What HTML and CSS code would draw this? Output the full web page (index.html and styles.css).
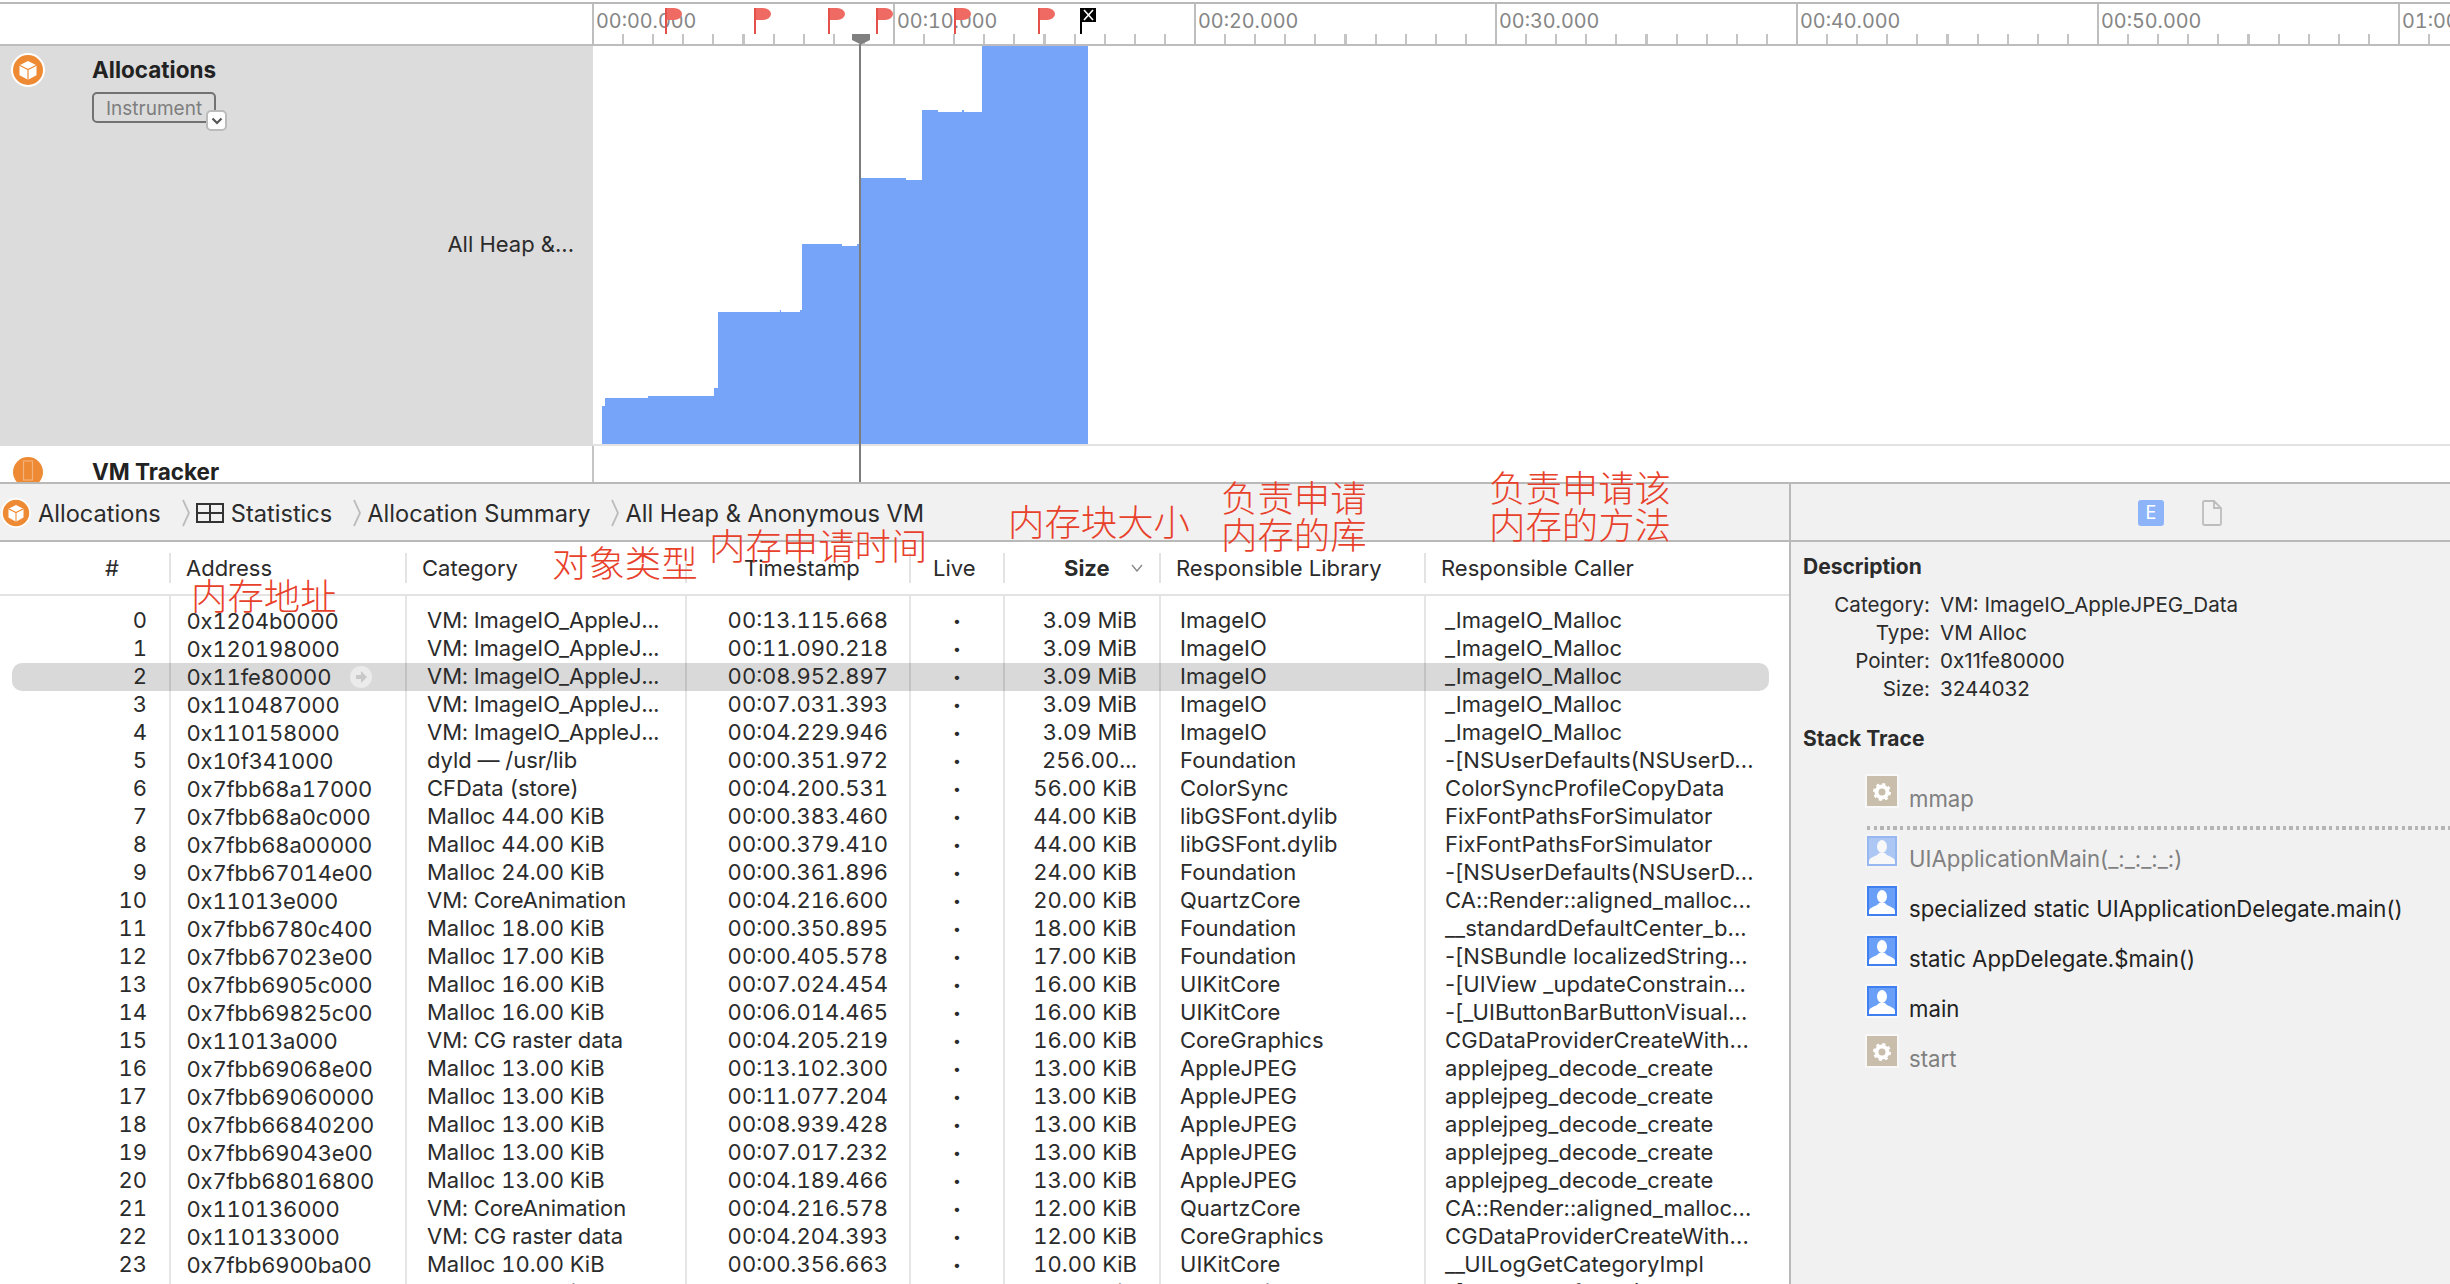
FILE: index.html
```html
<!DOCTYPE html>
<html lang="en">
<head>
<meta charset="utf-8">
<title>Instruments Allocations</title>
<link rel="stylesheet" href="styles.css">
</head>
<body>
<svg class="sprites" width="0" height="0" aria-hidden="true">
  <symbol id="cube" viewBox="0 0 34 34">
    <circle cx="17" cy="17" r="17" fill="#fff"/>
    <circle cx="17" cy="17" r="15" fill="#ee8a33"/>
    <path d="M17 8l8.5 4.2v10L17 26.8l-8.5-4.6v-10z" fill="#fff"/>
    <path d="M8.5 12.2l8.500 4.300 8.500-4.300M17 16.500v10.300" fill="none" stroke="#ee8a33" stroke-width="1.200"/>
  </symbol>
  <symbol id="person" viewBox="0 0 30 30">
    <rect width="30" height="30" fill="#3f7ff0"/>
    <rect x="2" y="2" width="26" height="26" fill="#6a9ff7"/>
    <ellipse cx="15" cy="10.500" rx="5" ry="6.500" fill="#fff"/>
    <path d="M2 28v-3c0-4 8-4.500 10-8h6c2 3.500 10 4 10 8v3z" fill="#fff"/>
  </symbol>
  <symbol id="gear" viewBox="0 0 30 30">
    <rect width="30" height="30" fill="#c9bdab"/>
    <circle cx="15" cy="16" r="5.500" fill="none" stroke="#fff" stroke-width="4"/>
    <circle cx="15" cy="16" r="8" fill="none" stroke="#fff" stroke-width="2" stroke-dasharray="3.200 3.080"/>
  </symbol>
</svg>

<header class="ruler">
  <div class="ruler-left"></div>
  <div class="ruler-scale">
    <div class="seg"><span>00:00.000</span></div>
    <div class="seg"><span>00:10.000</span></div>
    <div class="seg"><span>00:20.000</span></div>
    <div class="seg"><span>00:30.000</span></div>
    <div class="seg"><span>00:40.000</span></div>
    <div class="seg"><span>00:50.000</span></div>
    <div class="seg"><span>01:00.000</span></div>
  </div>
  <svg class="flags" width="1100" height="46" viewBox="0 0 1100 46">
    <g fill="#ee6a62">
      <path d="M666 8h8a8 6 0 0 1 0 12h-8z"/>
      <path d="M755 8h8a8 6 0 0 1 0 12h-8z"/>
      <path d="M829 8h8a8 6 0 0 1 0 12h-8z"/>
      <path d="M877 8h8a8 6 0 0 1 0 12h-8z"/>
      <path d="M955 8h8a8 6 0 0 1 0 12h-8z"/>
      <path d="M1039 8h8a8 6 0 0 1 0 12h-8z"/>
    </g>
    <g stroke="#e4504a" stroke-width="2">
      <path d="M666 8v26M755 8v26M829 8v26M877 8v26M955 8v26M1039 8v26"/>
    </g>
    <path d="M1081 8v26" stroke="#000" stroke-width="2"/>
    <rect x="1081" y="8" width="15" height="14" fill="#000"/>
    <path d="M1084 10l9 10M1093 10l-9 10" stroke="#fff" stroke-width="1.600"/>
    <path d="M852 34h18v6l-9 4.500-9-4.500z" fill="#808080"/>
  </svg>
</header>

<section class="track track-main">
  <div class="track-left">
    <div class="track-head">
      <svg class="track-icon"><use href="#cube"/></svg>
      <div class="track-names">
        <div class="track-name">Allocations</div>
        <div class="track-btn">Instrument
          <span class="track-chev"><svg width="12" height="8" viewBox="0 0 12 8"><path d="M1.500 1.500L6 6l4.500-4.500" fill="none" stroke="#555" stroke-width="2.200"/></svg></span>
        </div>
      </div>
    </div>
    <div class="track-sub">All Heap &amp;...</div>
  </div>
  <div class="track-right">
    <svg class="chart" width="1857" height="398" viewBox="593 46 1857 398">
      <path fill="#75a4f8" d="M602 444V406H605V398H648V396H714V388H718V312H780V310H781V312H800V310H802V244H842V246H857V244H860V178H906V180H922V110H938V112H962V110H964V112H982V46H1088V444Z"/>
    </svg>
  </div>
</section>
<section class="track track-vm">
  <div class="vm-left">
    <svg class="vm-icon" width="30" height="36" viewBox="0 0 30 36">
      <circle cx="15" cy="15" r="15" fill="#ee8a33" transform="translate(0 11)"/>
      <rect x="10.500" y="15" width="9" height="19" fill="none" stroke="#f3b27a" stroke-width="1.200"/>
    </svg>
    <div class="track-name">VM Tracker</div>
  </div>
  <div class="vm-right"></div>
</section>
<div class="playhead"></div>

<main class="main">
  <div class="left">
    <nav class="crumbs">
      <svg class="crumb-icon"><use href="#cube"/></svg>
      <span class="crumb c1">Allocations</span>
      <svg class="sep" width="8" height="28" viewBox="0 0 8 28"><path d="M1 1l6 13-6 13" fill="none" stroke="#bcbcbc" stroke-width="1.800"/></svg>
      <svg class="grid-icon" width="28" height="20" viewBox="0 0 28 20"><path d="M1 1h26v18H1zM1 10h26M14 1v18" fill="none" stroke="#333" stroke-width="2"/></svg>
      <span class="crumb c2">Statistics</span>
      <svg class="sep" width="8" height="28" viewBox="0 0 8 28"><path d="M1 1l6 13-6 13" fill="none" stroke="#bcbcbc" stroke-width="1.800"/></svg>
      <span class="crumb c3">Allocation Summary</span>
      <svg class="sep" width="8" height="28" viewBox="0 0 8 28"><path d="M1 1l6 13-6 13" fill="none" stroke="#bcbcbc" stroke-width="1.800"/></svg>
      <span class="crumb c4">All Heap &amp; Anonymous VM</span>
    </nav>
    <div class="thead">
      <span class="h-num">#</span>
      <span>Address</span>
      <span>Category</span>
      <span class="h-time">Timestamp</span>
      <span>Live</span>
      <span class="h-size"><b>Size</b><svg width="12" height="8" viewBox="0 0 12 8"><path d="M1 1l5 6 5-6" fill="none" stroke="#888" stroke-width="1.400"/></svg></span>
      <span>Responsible Library</span>
      <span>Responsible Caller</span>
    </div>
    <div class="tbody">
      <div class="row spacer"><span></span><span></span><span></span><span></span><span></span><span></span><span></span><span></span></div>
      <div class="row"><span>0</span><span>0x1204b0000</span><span>VM: ImageIO_AppleJ...</span><span>00:13.115.668</span><span>•</span><span>3.09 MiB</span><span>ImageIO</span><span>_ImageIO_Malloc</span></div>
      <div class="row"><span>1</span><span>0x120198000</span><span>VM: ImageIO_AppleJ...</span><span>00:11.090.218</span><span>•</span><span>3.09 MiB</span><span>ImageIO</span><span>_ImageIO_Malloc</span></div>
      <div class="row sel"><span>2</span><span>0x11fe80000<svg class="go" width="22" height="22" viewBox="0 0 22 22"><circle cx="11" cy="11" r="11" fill="#ebebeb"/><path d="M6 9h5V5l6 6-6 6v-4H6z" fill="#c8c8c8"/></svg></span><span>VM: ImageIO_AppleJ...</span><span>00:08.952.897</span><span>•</span><span>3.09 MiB</span><span>ImageIO</span><span>_ImageIO_Malloc</span></div>
      <div class="row"><span>3</span><span>0x110487000</span><span>VM: ImageIO_AppleJ...</span><span>00:07.031.393</span><span>•</span><span>3.09 MiB</span><span>ImageIO</span><span>_ImageIO_Malloc</span></div>
      <div class="row"><span>4</span><span>0x110158000</span><span>VM: ImageIO_AppleJ...</span><span>00:04.229.946</span><span>•</span><span>3.09 MiB</span><span>ImageIO</span><span>_ImageIO_Malloc</span></div>
      <div class="row"><span>5</span><span>0x10f341000</span><span>dyld — /usr/lib</span><span>00:00.351.972</span><span>•</span><span>256.00...</span><span>Foundation</span><span>-[NSUserDefaults(NSUserD...</span></div>
      <div class="row"><span>6</span><span>0x7fbb68a17000</span><span>CFData (store)</span><span>00:04.200.531</span><span>•</span><span>56.00 KiB</span><span>ColorSync</span><span>ColorSyncProfileCopyData</span></div>
      <div class="row"><span>7</span><span>0x7fbb68a0c000</span><span>Malloc 44.00 KiB</span><span>00:00.383.460</span><span>•</span><span>44.00 KiB</span><span>libGSFont.dylib</span><span>FixFontPathsForSimulator</span></div>
      <div class="row"><span>8</span><span>0x7fbb68a00000</span><span>Malloc 44.00 KiB</span><span>00:00.379.410</span><span>•</span><span>44.00 KiB</span><span>libGSFont.dylib</span><span>FixFontPathsForSimulator</span></div>
      <div class="row"><span>9</span><span>0x7fbb67014e00</span><span>Malloc 24.00 KiB</span><span>00:00.361.896</span><span>•</span><span>24.00 KiB</span><span>Foundation</span><span>-[NSUserDefaults(NSUserD...</span></div>
      <div class="row"><span>10</span><span>0x11013e000</span><span>VM: CoreAnimation</span><span>00:04.216.600</span><span>•</span><span>20.00 KiB</span><span>QuartzCore</span><span>CA::Render::aligned_malloc...</span></div>
      <div class="row"><span>11</span><span>0x7fbb6780c400</span><span>Malloc 18.00 KiB</span><span>00:00.350.895</span><span>•</span><span>18.00 KiB</span><span>Foundation</span><span>__standardDefaultCenter_b...</span></div>
      <div class="row"><span>12</span><span>0x7fbb67023e00</span><span>Malloc 17.00 KiB</span><span>00:00.405.578</span><span>•</span><span>17.00 KiB</span><span>Foundation</span><span>-[NSBundle localizedString...</span></div>
      <div class="row"><span>13</span><span>0x7fbb6905c000</span><span>Malloc 16.00 KiB</span><span>00:07.024.454</span><span>•</span><span>16.00 KiB</span><span>UIKitCore</span><span>-[UIView _updateConstrain...</span></div>
      <div class="row"><span>14</span><span>0x7fbb69825c00</span><span>Malloc 16.00 KiB</span><span>00:06.014.465</span><span>•</span><span>16.00 KiB</span><span>UIKitCore</span><span>-[_UIButtonBarButtonVisual...</span></div>
      <div class="row"><span>15</span><span>0x11013a000</span><span>VM: CG raster data</span><span>00:04.205.219</span><span>•</span><span>16.00 KiB</span><span>CoreGraphics</span><span>CGDataProviderCreateWith...</span></div>
      <div class="row"><span>16</span><span>0x7fbb69068e00</span><span>Malloc 13.00 KiB</span><span>00:13.102.300</span><span>•</span><span>13.00 KiB</span><span>AppleJPEG</span><span>applejpeg_decode_create</span></div>
      <div class="row"><span>17</span><span>0x7fbb69060000</span><span>Malloc 13.00 KiB</span><span>00:11.077.204</span><span>•</span><span>13.00 KiB</span><span>AppleJPEG</span><span>applejpeg_decode_create</span></div>
      <div class="row"><span>18</span><span>0x7fbb66840200</span><span>Malloc 13.00 KiB</span><span>00:08.939.428</span><span>•</span><span>13.00 KiB</span><span>AppleJPEG</span><span>applejpeg_decode_create</span></div>
      <div class="row"><span>19</span><span>0x7fbb69043e00</span><span>Malloc 13.00 KiB</span><span>00:07.017.232</span><span>•</span><span>13.00 KiB</span><span>AppleJPEG</span><span>applejpeg_decode_create</span></div>
      <div class="row"><span>20</span><span>0x7fbb68016800</span><span>Malloc 13.00 KiB</span><span>00:04.189.466</span><span>•</span><span>13.00 KiB</span><span>AppleJPEG</span><span>applejpeg_decode_create</span></div>
      <div class="row"><span>21</span><span>0x110136000</span><span>VM: CoreAnimation</span><span>00:04.216.578</span><span>•</span><span>12.00 KiB</span><span>QuartzCore</span><span>CA::Render::aligned_malloc...</span></div>
      <div class="row"><span>22</span><span>0x110133000</span><span>VM: CG raster data</span><span>00:04.204.393</span><span>•</span><span>12.00 KiB</span><span>CoreGraphics</span><span>CGDataProviderCreateWith...</span></div>
      <div class="row"><span>23</span><span>0x7fbb6900ba00</span><span>Malloc 10.00 KiB</span><span>00:00.356.663</span><span>•</span><span>10.00 KiB</span><span>UIKitCore</span><span>__UILogGetCategoryImpl</span></div>
      <div class="row"><span>24</span><span>0x7fbb68014000</span><span>Malloc 8.00 KiB</span><span>00:00.352.104</span><span>•</span><span>8.00 KiB</span><span>Foundation</span><span>-[NSUserDefaults(NSUserD...</span></div>
    </div>
  </div>
  <aside class="panel">
    <div class="panel-bar">
      <span class="ext-btn">E</span>
      <svg width="20" height="26" viewBox="0 0 20 26"><path d="M1 2.500A1.500 1.500 0 0 1 2.500 1H12l7 7v15.500a1.500 1.500 0 0 1-1.500 1.500h-15A1.500 1.500 0 0 1 1 23.500zM12 1v7h7" fill="none" stroke="#bdbdbd" stroke-width="1.800"/></svg>
    </div>
    <div class="panel-body">
      <h2 class="panel-h desc-h">Description</h2>
      <dl class="desc">
        <dt>Category:</dt><dd>VM: ImageIO_AppleJPEG_Data</dd>
        <dt>Type:</dt><dd>VM Alloc</dd>
        <dt>Pointer:</dt><dd>0x11fe80000</dd>
        <dt>Size:</dt><dd>3244032</dd>
      </dl>
      <h2 class="panel-h stack-h">Stack Trace</h2>
      <div class="frames">
        <div class="frame dim"><svg class="ficon"><use href="#gear"/></svg><span>mmap</span></div>
        <div class="dots"></div>
        <div class="frame dim"><svg class="ficon faded"><use href="#person"/></svg><span>UIApplicationMain(_:_:_:_:)</span></div>
        <div class="frame"><svg class="ficon"><use href="#person"/></svg><span>specialized static UIApplicationDelegate.main()</span></div>
        <div class="frame"><svg class="ficon"><use href="#person"/></svg><span>static AppDelegate.$main()</span></div>
        <div class="frame"><svg class="ficon"><use href="#person"/></svg><span>main</span></div>
        <div class="frame dim"><svg class="ficon"><use href="#gear"/></svg><span>start</span></div>
      </div>
    </div>
  </aside>
</main>

<div class="note n-addr">内存地址</div>
<div class="note n-type">对象类型</div>
<div class="note n-time">内存申请时间</div>
<div class="note n-size">内存块大小</div>
<div class="note n-lib">负责申请<br>内存的库</div>
<div class="note n-caller">负责申请该<br>内存的方法</div>
</body>
</html>
```

FILE: styles.css
```css
* { box-sizing: border-box; }
html, body { margin: 0; padding: 0; }
body {
  position: relative;
  width: 2450px;
  height: 1284px;
  overflow: hidden;
  background: #fff;
  color: #2b2b2b;
  font-family: Inter, "Noto Sans", "Liberation Sans", sans-serif;
  font-size: 22px;
}
.sprites { position: absolute; }

/* ruler */
.ruler {
  position: relative;
  display: flex;
  margin-top: 2px;
  height: 44px;
  border-top: 2px solid #b9b9b9;
  border-bottom: 2px solid #bdbdbd;
}
.ruler-left { width: 592px; flex: none; }
.ruler-scale { display: flex; flex: 1; overflow: hidden; }
.seg {
  flex: none;
  width: 301px;
  padding: 7px 0 0 2px;
  border-left: 2px solid #bebebe;
  color: #858585;
  font-size: 19.8px;
  font-variant-numeric: tabular-nums;
  line-height: 20px;
  white-space: nowrap;
  background: repeating-linear-gradient(90deg, transparent 0, transparent 28px, #c4c4c4 28px, #c4c4c4 30.1px) 0 100% / 100% 10px no-repeat;
}
.flags { position: absolute; left: 0; top: -4px; overflow: visible; }

/* tracks */
.track { display: flex; }
.track-main { height: 400px; }
.track-left {
  width: 593px;
  flex: none;
  background: #dcdcdc;
  padding-top: 7px;
}
.track-head { display: flex; }
.track-icon { width: 34px; height: 34px; margin-left: 11px; flex: none; }
.track-names { margin-left: 47px; }
.track-name { font-weight: 700; font-size: 22.5px; line-height: 34px; color: #222; }
.track-btn {
  position: relative;
  width: 124px;
  height: 31px;
  margin-top: 5px;
  border: 2px solid #727272;
  border-radius: 5px;
  color: #7e7e7e;
  font-size: 19px;
  line-height: 29px;
  padding-left: 12px;
}
.track-chev {
  position: absolute;
  right: -13px;
  bottom: -10px;
  width: 21px;
  height: 21px;
  display: flex;
  align-items: center;
  justify-content: center;
  background: #fff;
  border: 2px solid #bbb;
  border-radius: 5px;
}
.track-sub {
  margin-top: 107px;
  padding-right: 19px;
  text-align: right;
  font-size: 22px;
  line-height: 28px;
  color: #2b2b2b;
}
.track-right { flex: 1; border-bottom: 2px solid #e2e2e2; }
.chart { display: block; }

.track-vm { height: 36px; overflow: hidden; }
.vm-left { width: 593px; flex: none; display: flex; align-items: flex-start; }
.vm-icon { margin: 0 0 0 13px; flex: none; }
.vm-left .track-name { margin: 9px 0 0 49px; }
.vm-right { flex: 1; border-left: 2px solid #c4c4c4; margin-left: -1px; }
.playhead {
  position: absolute;
  left: 859px;
  top: 44px;
  width: 2px;
  height: 438px;
  background: #7c7c7c;
}

/* main */
.main {
  display: flex;
  height: 802px;
  overflow: hidden;
  border-top: 2px solid #b9b9b9;
}
.left { width: 1789px; flex: none; }
.crumbs {
  display: flex;
  align-items: center;
  height: 58px;
  padding: 2px 0 0 1px;
  background: #f1f1f1;
  border-bottom: 2px solid #b9b9b9;
  font-size: 23.6px;
}
.crumb-icon { width: 30px; height: 30px; flex: none; }
.crumb { white-space: nowrap; color: #2b2b2b; }
.c1 { margin-left: 7px; }
.sep { flex: none; margin-left: 21px; }
.grid-icon { flex: none; margin-left: 6px; }
.c2 { margin-left: 7px; }
.c3 { margin-left: 6px; }
.c4 { margin-left: 6px; }

.thead, .row {
  display: grid;
  grid-template-columns: 169px 236px 280px 224px 94px 156px 265px 365px;
}
.thead {
  height: 54px;
  padding-top: 11px;
  border-bottom: 2px solid #e3e3e3;
  font-size: 22px;
}
.thead > span {
  height: 30px;
  line-height: 30px;
  border-left: 2px solid #e3e3e3;
  padding-left: 15px;
  white-space: nowrap;
}
.thead > .h-num { border-left: 0; padding: 0 50px 0 0; text-align: right; }
.thead > .h-time { padding-left: 57px; }
.thead > span:nth-child(5) { padding-left: 22px; }
.thead > .h-size {
  display: flex;
  align-items: center;
  padding-left: 59px;
  gap: 21px;
}

.tbody { height: 688px; overflow: hidden; }
.row {
  position: relative;
  z-index: 0;
  height: 28px;
  line-height: 27px;
  font-size: 22px;
}
.row.spacer { height: 11px; }
.row > span {
  display: block;
  border-left: 2px solid rgba(0, 0, 0, 0.1);
  white-space: nowrap;
  overflow: hidden;
}
.row > span:nth-child(1) { border-left: 0; text-align: right; padding-right: 22px; font-variant-numeric: tabular-nums; }
.row > span:nth-child(2) {
  padding-left: 15.500px;
  display: flex;
  align-items: center;
  font-variant-numeric: tabular-nums;
  letter-spacing: -0.150px;
}
.row > span:nth-child(3) { padding-left: 20px; font-variant-numeric: tabular-nums; letter-spacing: -0.050px; }
.row > span:nth-child(4) { text-align: right; padding-right: 21px; font-variant-numeric: tabular-nums; }
.row > span:nth-child(5) { text-align: center; font-size: 14px; }
.row > span:nth-child(6) { text-align: right; padding-right: 22px; font-variant-numeric: tabular-nums; }
.row > span:nth-child(7) { padding-left: 19px; letter-spacing: 0.050px; }
.row > span:nth-child(8) { padding-left: 19px; letter-spacing: 0.080px; }
.row.sel::before {
  content: "";
  position: absolute;
  z-index: -1;
  left: 12px;
  right: 20px;
  top: 0;
  bottom: 0;
  background: #d9d9d9;
  border-radius: 10px;
}
.go { margin-left: 19px; flex: none; }

/* inspector */
.panel {
  flex: 1;
  background: #f1f1f1;
  border-left: 2px solid #b9b9b9;
}
.panel-bar {
  display: flex;
  align-items: center;
  gap: 38px;
  height: 58px;
  padding: 2px 0 0 347px;
  border-bottom: 2px solid #b9b9b9;
}
.ext-btn {
  width: 26px;
  height: 26px;
  border-radius: 3px;
  background: #8db4f8;
  color: #fff;
  text-align: center;
  font-size: 18px;
  line-height: 26px;
}
.panel-body { padding: 11px 0 0 12px; font-size: 20.6px; }
.panel-h { margin: 0; font-size: 21px; line-height: 28px; font-weight: 700; color: #2b2b2b; }
.desc {
  display: grid;
  grid-template-columns: 127px 1fr;
  column-gap: 10px;
  margin: 10px 0 0;
  line-height: 28px;
}
.desc dt { text-align: right; white-space: nowrap; }
.desc dd { margin: 0; white-space: nowrap; }
.stack-h { margin-top: 22px; }
.frames { margin: 23px 0 0 64px; font-size: 22.2px; }
.frame { display: flex; height: 50px; color: #222; }
.frame.dim { color: #808080; }
.frame span { margin-left: 12px; padding-top: 9px; line-height: 28px; white-space: nowrap; }
.ficon { width: 30px; height: 30px; flex: none; box-shadow: 0 0 0 2px #f8f8f8; }
.ficon.faded { opacity: 0.5; }
.dots {
  height: 4px;
  margin: 0 0 6px;
  background: repeating-linear-gradient(90deg, #b5b5b5 0, #b5b5b5 3.400px, transparent 3.400px, transparent 6.600px);
}

/* red annotations */
.note {
  position: absolute;
  color: #e8412b;
  font-family: "Noto Sans CJK SC", sans-serif;
  font-size: 36.4px;
  font-weight: 300;
  line-height: 37px;
  white-space: nowrap;
}
.n-addr { left: 191px; top: 576px; }
.n-type { left: 552px; top: 543px; }
.n-time { left: 709px; top: 526px; }
.n-size { left: 1008px; top: 502px; }
.n-lib { left: 1221px; top: 478px; }
.n-caller { left: 1489px; top: 468px; }
```
